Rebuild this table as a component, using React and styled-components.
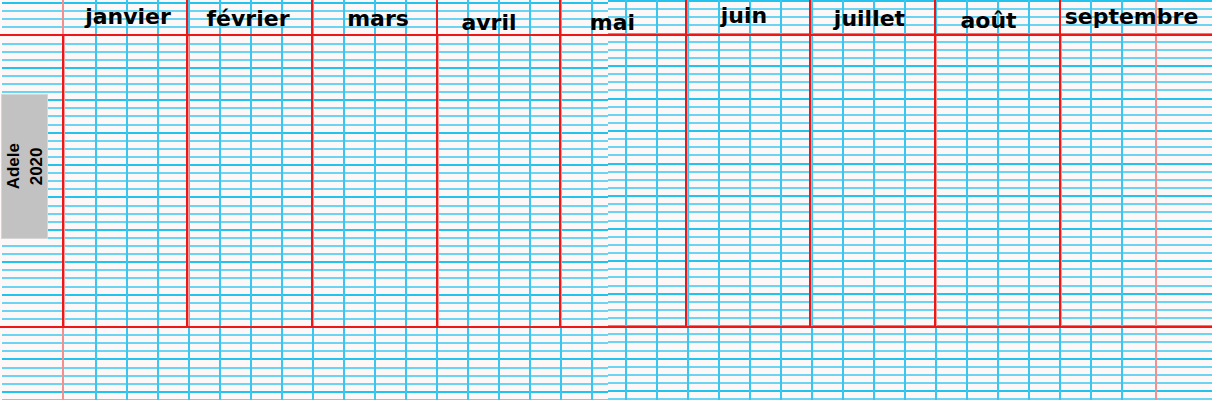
import React from 'react'
import styled, { createGlobalStyle } from 'styled-components'

///Paper colours
const PAPER = '#fdf7f7'
const FINE = '#6ad5f3'
const THICK = '#22c4ee'
const VERT = '#3ac6ee'
const MARGIN = '#f29090'
const RED = '#ee1717'

// horizontal rules of one sheet, rounded to whole pixels so they stay crisp
const rules = (start, step, height) => {
    const stops = []
    let end = 0
    for (let k = 0; start + step * k < height; k++) {
        const y = Math.round(start + step * k)
        stops.push(`${PAPER} ${end}px ${y}px`)
        stops.push(`${k % 4 === 0 ? THICK : FINE} ${y}px ${y + 2}px`)
        end = y + 2
    }
    stops.push(`${PAPER} ${end}px 100%`)
    return `linear-gradient(to bottom, ${stops.join(', ')})`
}

const GlobalStyle = createGlobalStyle`
    html, body {
        margin: 0;
        padding: 0;
        background: ${PAPER};
    }
`

///Styled Components

// two sheets of Seyès paper stitched at x=608, the right one sits a bit higher
const Page = styled.div`
    width: 1212px;
    height: 400px;
    overflow: hidden;
    background-color: ${PAPER};
    background-image:
        linear-gradient(${MARGIN}, ${MARGIN}),
        linear-gradient(${MARGIN}, ${MARGIN}),
        repeating-linear-gradient(to right, ${VERT} 0 2px, transparent 2px 31px),
        ${rules(0, 8.13, 400)},
        repeating-linear-gradient(to right, ${VERT} 0 2px, transparent 2px 31px),
        ${rules(2, 8.1, 400)};
    background-position:
        1155px 0,
        62px 0,
        625px 0,
        608px 0,
        95px 0,
        2px 0;
    background-size:
        2px 100%,
        2px 100%,
        525px 100%,
        604px 100%,
        513px 100%,
        100% 100%;
    background-repeat: no-repeat;
`

const Calendar = styled.div`
    display: flex;
    flex-direction: column;
`

const Row = styled.div`
    display: grid;
    grid-template-columns: ${props => props.$columns};
    height: ${props => props.$height}px;
    border-bottom: 2px solid ${RED};
`

const MarginCell = styled.div`
    display: flex;
    flex-direction: column;
`

const MonthHead = styled.div`
    display: flex;
    justify-content: center;
    align-items: flex-start;
    border-left: ${props => props.$first ? 'none' : `2px solid ${RED}`};
    margin-left: ${props => props.$first ? '2px' : '0'};
    padding-top: ${props => props.$top}px;
    padding-left: ${props => Math.max(0, props.$dx * 2)}px;
    padding-right: ${props => Math.max(0, -props.$dx * 2)}px;
    font-family: "Comic Sans MS", "DejaVu Sans", sans-serif;
    font-weight: bold;
    font-size: 22px;
    line-height: 22px;
    color: #000;
    white-space: nowrap;
`

const MonthBody = styled.div`
    border-left: 2px solid ${RED};
    box-shadow: 1px 0 0 #f59a9a inset;
`

const NameTag = styled.div`
    margin: 58px 0 0 1px;
    width: 47px;
    height: 145px;
    box-sizing: border-box;
    background: #c2c2c2;
    border: 1px solid #d6d6d6;
    display: flex;
    align-items: center;
    justify-content: center;
`

const NameText = styled.div`
    writing-mode: vertical-rl;
    transform: rotate(180deg);
    text-align: center;
    font-family: "Liberation Sans", Arial, sans-serif;
    font-weight: bold;
    font-size: 17px;
    line-height: 23px;
    color: #000;
`
///End of Styled Components

const months = [
    { name: 'janvier', width: 124, dx: 3, top: 6 },
    { name: 'février', width: 125, dx: -1.5, top: 8 },
    { name: 'mars', width: 125, dx: 3.5, top: 8 },
    { name: 'avril', width: 123, dx: -9.5, top: 12 },
    { name: 'mai', width: 126, dx: -10.5, top: 12 },
    { name: 'juin', width: 124, dx: -4, top: 5 },
    { name: 'juillet', width: 125, dx: -3, top: 8 },
    { name: 'août', width: 125, dx: -9, top: 10 },
    { name: 'septembre', width: 0, dx: -5, top: 6 },
]

const columns = '62px ' + months.map(m => m.width ? `${m.width}px` : '1fr').join(' ')

export default function App() {
    return (
        <Page>
            <GlobalStyle />
            <Calendar>
                <Row $columns={columns} $height={34}>
                    <MarginCell />
                    {months.map((m, i) => (
                        <MonthHead key={m.name} $first={i === 0} $dx={m.dx} $top={m.top}>
                            {m.name}
                        </MonthHead>
                    ))}
                </Row>
                <Row $columns={columns} $height={290}>
                    <MarginCell>
                        <NameTag>
                            <NameText>Adele<br />2020</NameText>
                        </NameTag>
                    </MarginCell>
                    {months.map(m => (
                        <MonthBody key={m.name} />
                    ))}
                </Row>
            </Calendar>
        </Page>
    )
}
